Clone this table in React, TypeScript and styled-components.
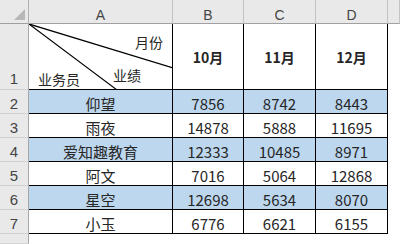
import React from 'react'
import styled, { createGlobalStyle } from 'styled-components'

const GlobalStyle = createGlobalStyle`
  html, body { margin: 0; padding: 0; background: #ffffff; }
  * { box-sizing: border-box; }
`

interface iRow {
  name: string
  values: number[]
  blue?: boolean
}

const rows: iRow[] = [
  { name: '仰望', values: [7856, 8742, 8443], blue: true },
  { name: '雨夜', values: [14878, 5888, 11695] },
  { name: '爱知趣教育', values: [12333, 10485, 8971], blue: true },
  { name: '阿文', values: [7016, 5064, 12868] },
  { name: '星空', values: [12698, 5634, 8070], blue: true },
  { name: '小玉', values: [6776, 6621, 6155] },
]

const letters = ['A', 'B', 'C', 'D']
const months = ['10月', '11月', '12月']

const App = () => {
  return (
    <>
      <GlobalStyle />
      <Sheet>
        <Corner>
          <SelectAll />
        </Corner>
        {letters.map((l) => (
          <ColHead key={l}>{l}</ColHead>
        ))}
        <ColHead />

        <RowHead tall>1</RowHead>
        <SplitCell>
          <Diagonal width="144" height="66" viewBox="0 0 144 66">
            <line x1="0" y1="0" x2="144" y2="44" stroke="#000" strokeWidth="1.3" />
            <line x1="0" y1="0" x2="88" y2="66" stroke="#000" strokeWidth="1.1" />
          </Diagonal>
          <Label x={106} y={9}>月份</Label>
          <Label x={84} y={42}>业绩</Label>
          <Label x={9} y={46}>业务员</Label>
        </SplitCell>
        {months.map((m) => (
          <Cell key={m} bold>{m}</Cell>
        ))}
        <Blank />

        {rows.map((r, i) => (
          <React.Fragment key={r.name}>
            <RowHead>{i + 2}</RowHead>
            <Cell blue={r.blue}>{r.name}</Cell>
            {r.values.map((v, j) => (
              <Cell key={j} blue={r.blue}>{v}</Cell>
            ))}
            <Blank />
          </React.Fragment>
        ))}

        <RowHead />
        <Blank />
        <Blank />
        <Blank />
        <Blank />
        <Blank />
      </Sheet>
    </>
  )
}

export default App

const Sheet = styled.div`
  width: 400px;
  height: 244px;
  overflow: hidden;
  display: grid;
  grid-template-columns: 29px 144px 71px 72px 72px 12px;
  grid-template-rows: 24px 66px repeat(6, 24px) 10px;
  font-family: "Noto Sans CJK SC", "Liberation Sans", sans-serif;
  background: #ffffff;
`

const Corner = styled.div`
  position: relative;
  background: #e9e9e9;
  border-right: 1px solid #b0b0b0;
  border-bottom: 1px solid #a0a0a0;
`

const SelectAll = styled.div`
  position: absolute;
  right: 3px;
  bottom: 3px;
  width: 0;
  height: 0;
  border-left: 11px solid transparent;
  border-bottom: 11px solid #b8b8b8;
`

const ColHead = styled.div`
  background: #e9e9e9;
  border-right: 1px solid #c4c4c4;
  border-bottom: 1px solid #a0a0a0;
  color: #444444;
  font-family: "Liberation Sans", sans-serif;
  font-size: 14px;
  display: flex;
  justify-content: center;
  align-items: center;
  padding-top: 6px;
`

const RowHead = styled.div<{ tall?: boolean }>`
  background: #e9e9e9;
  border-right: 1px solid #a8a8a8;
  border-bottom: 1px solid #d2d2d2;
  color: #444444;
  font-family: "Liberation Sans", sans-serif;
  font-size: 15px;
  display: flex;
  justify-content: center;
  align-items: flex-end;
  padding-bottom: ${({ tall }) => (tall ? '2px' : '1px')};
`

const Cell = styled.div<{ blue?: boolean; bold?: boolean }>`
  background: ${({ blue }) => (blue ? '#bdd7ee' : '#ffffff')};
  border-right: 1px solid #000000;
  border-bottom: 1px solid #000000;
  color: #262626;
  font-size: ${({ bold }) => (bold ? '14px' : '15px')};
  font-weight: ${({ bold }) => (bold ? 700 : 400)};
  display: flex;
  justify-content: center;
  align-items: center;
  padding-top: ${({ bold }) => (bold ? '0' : '3px')};
  white-space: nowrap;
`

const SplitCell = styled.div`
  position: relative;
  border-right: 1px solid #000000;
  border-bottom: 1px solid #000000;
`

const Diagonal = styled.svg`
  position: absolute;
  left: 0;
  top: 0;
`

const Label = styled.span<{ x: number; y: number }>`
  position: absolute;
  left: ${({ x }) => x}px;
  top: ${({ y }) => y}px;
  font-size: 14px;
  line-height: 18px;
  color: #262626;
  white-space: nowrap;
`

const Blank = styled.div`
  background: #ffffff;
`
